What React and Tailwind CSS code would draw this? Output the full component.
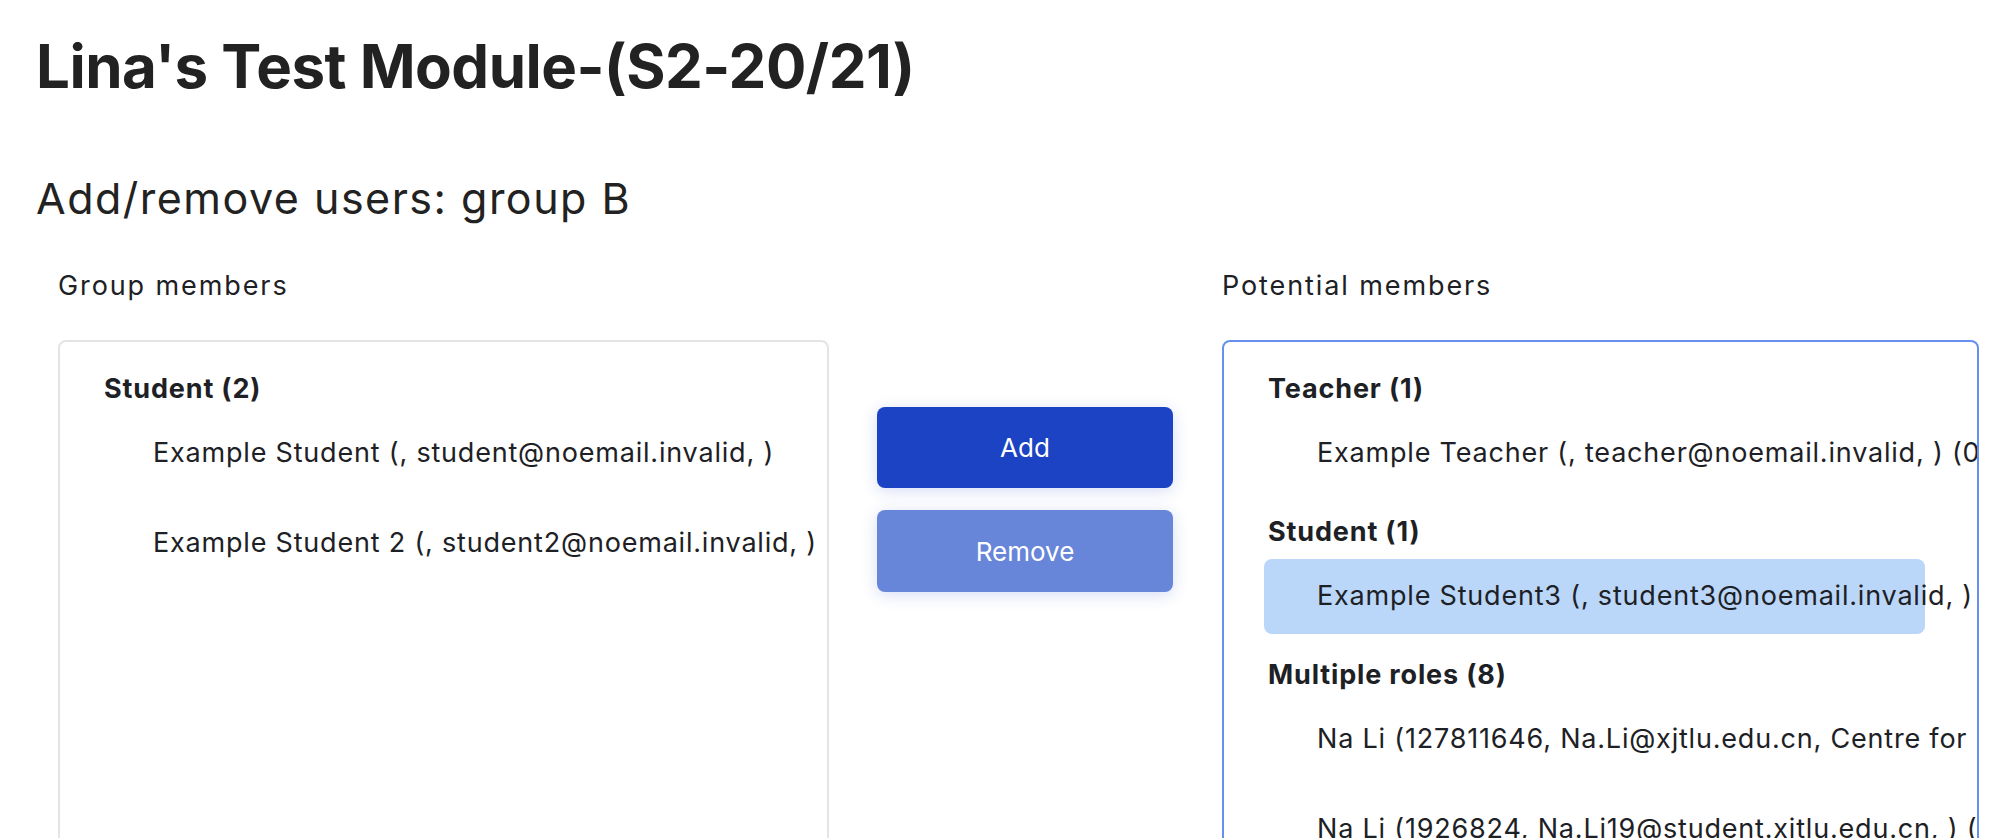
const font = { fontFamily: "Inter, 'Noto Sans', sans-serif" };

const groupMembers = [
  {
    label: "Student (2)",
    options: [
      { text: "Example Student (, student@noemail.invalid, )" },
      { text: "Example Student 2 (, student2@noemail.invalid, )" },
    ],
  },
];

const potentialMembers = [
  {
    label: "Teacher (1)",
    options: [{ text: "Example Teacher (, teacher@noemail.invalid, ) (0)" }],
  },
  {
    label: "Student (1)",
    options: [{ text: "Example Student3 (, student3@noemail.invalid, ) (0)", selected: true }],
  },
  {
    label: "Multiple roles (8)",
    options: [
      { text: "Na Li (127811646, Na.Li@xjtlu.edu.cn, Centre for Educational Development) (0)" },
      { text: "Na Li (1926824, Na.Li19@student.xjtlu.edu.cn, ) (0)" },
    ],
  },
];

function MemberList({ groups, focused }) {
  return (
    <div
      className={`h-[520px] overflow-hidden rounded-lg bg-white pt-[21px] pl-[40px] ${
        focused ? "border-2 border-[#6690ef]" : "border-2 border-[#e4e4e4]"
      }`}
    >
      {groups.map((g) => (
        <div key={g.label}>
          <div className="flex h-[53px] items-center pl-[4px] text-[27px] font-bold tracking-[0.85px] text-[#1d2125]">
            {g.label}
          </div>
          {g.options.map((o) => (
            <div
              key={o.text}
              className={`mb-[15px] flex h-[75px] w-[661px] items-center whitespace-nowrap rounded-lg pl-[53px] text-[27px] tracking-[0.8px] text-[#1d2125] ${
                o.selected ? "bg-[#bad6f9]" : ""
              }`}
            >
              {o.text}
            </div>
          ))}
        </div>
      ))}
    </div>
  );
}

export default function App() {
  return (
    <div className="h-[838px] w-[1994px] overflow-hidden bg-white" style={font}>
      <div className="pl-[36px] pt-[30px]">
        <h1 className="text-[60px] font-bold leading-[72px] tracking-[-0.5px] text-[#222222]">
          Lina's Test Module-(S2-20/21)
        </h1>
        <h2 className="mt-[71px] text-[43px] leading-[50px] tracking-[1.5px] text-[#222222]">
          Add/remove users: group B
        </h2>
      </div>

      <div className="mt-[47px] flex pl-[58px]">
        {/* Group members */}
        <div className="w-[771px]">
          <p className="text-[27px] leading-[32px] tracking-[1.9px] text-[#1d2125]">Group members</p>
          <div className="mt-[38px]">
            <MemberList groups={groupMembers} />
          </div>
        </div>

        {/* Buttons */}
        <div className="ml-[48px] flex w-[296px] flex-col gap-[22px] pt-[137px]">
          <button className="h-[81px] rounded-lg bg-[#1c43c4] text-[26px] text-white shadow-[0_3px_16px_rgba(28,67,196,0.18)]">
            Add
          </button>
          <button className="h-[82px] rounded-lg bg-[#6886d9] text-[26px] text-white shadow-[0_3px_16px_rgba(28,67,196,0.18)]">
            Remove
          </button>
        </div>

        {/* Potential members */}
        <div className="ml-[49px] w-[757px]">
          <p className="text-[27px] leading-[32px] tracking-[1.9px] text-[#1d2125]">Potential members</p>
          <div className="mt-[38px]">
            <MemberList groups={potentialMembers} focused />
          </div>
        </div>
      </div>
    </div>
  );
}
